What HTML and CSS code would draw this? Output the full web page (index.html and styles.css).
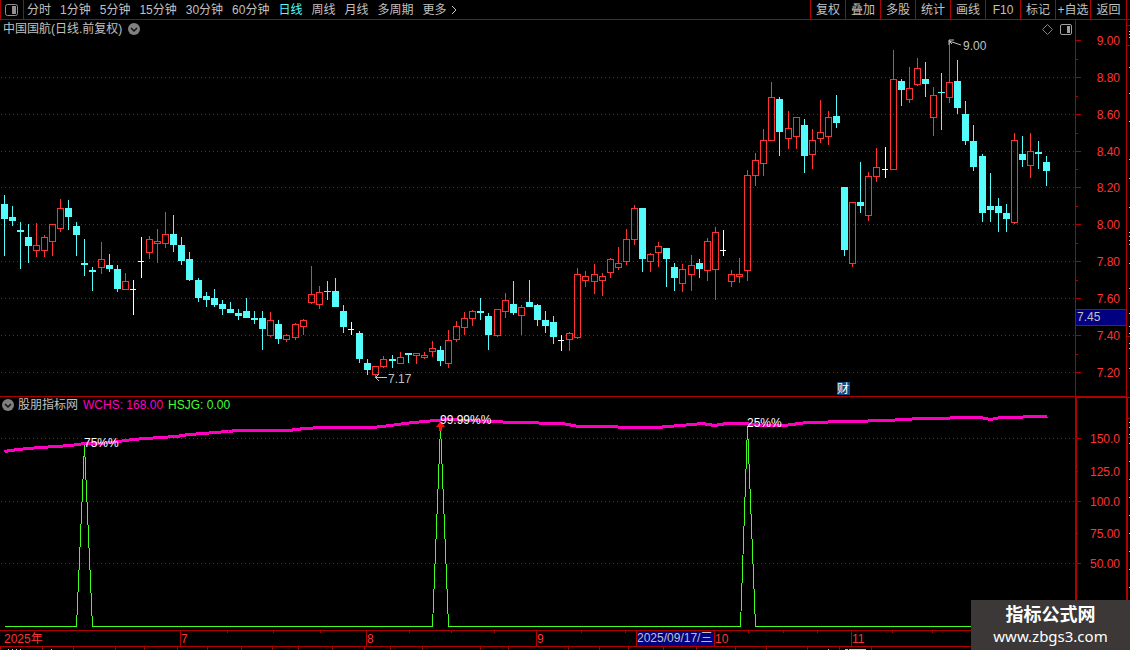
FILE: index.html
```html
<!DOCTYPE html>
<html lang="zh-CN">
<head>
  <meta charset="UTF-8">
  <meta name="viewport" content="width=device-width, initial-scale=1.0">
  <title>中国国航 日线</title>
  <link rel="stylesheet" href="styles.css">
</head>
<body>
  <div class="terminal">
    <header class="toolbar">
      <button class="layout-button" aria-label="布局">
        <svg width="13" height="12" viewBox="0 0 13 12"><rect x="0.5" y="0.5" width="12" height="11" rx="2" fill="none" stroke="#909090"/><rect x="7" y="2" width="4" height="8" fill="#909090"/></svg>
      </button>
      <nav class="periods">
        <button>分时</button>
        <button>1分钟</button>
        <button>5分钟</button>
        <button>15分钟</button>
        <button>30分钟</button>
        <button>60分钟</button>
        <button class="active">日线</button>
        <button>周线</button>
        <button>月线</button>
        <button>多周期</button>
        <button class="more">更多<svg width="6" height="10" viewBox="0 0 6 10"><path d="M1 1L5 5L1 9" fill="none" stroke="#c0c0c0"/></svg></button>
      </nav>
      <div class="tools">
        <button>复权</button>
        <button>叠加</button>
        <button>多股</button>
        <button>统计</button>
        <button>画线</button>
        <button>F10</button>
        <button>标记</button>
        <button>+自选</button>
        <button>返回</button>
      </div>
    </header>

    <main class="workspace">
      <section class="panel price-panel">
        <div class="panel-title">
          <span>中国国航(日线.前复权)</span>
          <button class="round-button" aria-label="展开"><svg width="12" height="12" viewBox="0 0 12 12"><circle cx="6" cy="6" r="6" fill="#808080"/><path d="M3 5L6 8L9 5" fill="none" stroke="#111" stroke-width="1.5"/></svg></button>
        </div>
        <div class="panel-icons">
          <button aria-label="标记"><svg width="11" height="11" viewBox="0 0 11 11"><path d="M5.5 0.5L10.5 5.5L5.5 10.5L0.5 5.5Z" fill="none" stroke="#808080"/></svg></button>
          <button aria-label="侧栏"><svg width="12" height="11" viewBox="0 0 12 11"><rect x="0.5" y="0.5" width="11" height="10" rx="1.5" fill="none" stroke="#a0a0a0"/><rect x="7" y="2" width="3" height="7" fill="#a0a0a0"/></svg></button>
        </div>
        <svg id="priceChart" class="chart" viewBox="0 20 1075 376"></svg>
      </section>
      <svg id="priceAxis" class="axis" viewBox="1075 20 51 376"></svg>

      <section class="panel indicator-panel">
        <div class="panel-title indicator-title">
          <button class="round-button" aria-label="展开"><svg width="12" height="12" viewBox="0 0 12 12"><circle cx="6" cy="6" r="6" fill="#808080"/><path d="M3 5L6 8L9 5" fill="none" stroke="#111" stroke-width="1.5"/></svg></button>
          <span>股朋指标网</span>
          <span class="wchs">WCHS: 168.00</span>
          <span class="hsjg">HSJG: 0.00</span>
        </div>
        <svg id="indicatorChart" class="chart" viewBox="0 397 1075 233"></svg>
      </section>
      <svg id="indicatorAxis" class="axis" viewBox="1075 397 51 233"></svg>

      <svg id="sideStrip" class="side-strip" viewBox="1126 20 4 610"></svg>
      <svg id="timeAxis" class="time-axis" viewBox="0 630 1130 20"></svg>
    </main>

    <div class="site-mark">
      <strong>指标公式网</strong>
      <span>www.zbgs3.com</span>
    </div>
  </div>

  <script src="chart.js"></script>
</body>
</html>
```
FILE: styles.css
```css
body {
  margin: 0;
  background-color: #000;
  color: #c0c0c0;
  font-family: "Liberation Sans", "Noto Sans CJK SC", sans-serif;
  font-size: 12px;
  line-height: 18px;
}

button {
  margin: 0;
  padding: 0;
  border: 0;
  background: none;
  color: inherit;
  font: inherit;
  white-space: nowrap;
  cursor: pointer;
}

svg {
  display: block;
}

.terminal {
  position: relative;
  min-height: 100vh;
  overflow: hidden;
}

.toolbar {
  display: flex;
  box-sizing: border-box;
  height: 20px;
  border-bottom: 1px solid #b00000;
}

.layout-button {
  box-sizing: border-box;
  width: 24px;
  padding-left: 4px;
  border-left: 1px solid #b00000;
  border-right: 1px solid #b00000;
}

.periods {
  display: flex;
  flex: 1;
  gap: 9px;
  padding-left: 3px;
}

.periods .active {
  color: #54fcfc;
}

.more {
  display: flex;
  align-items: center;
  gap: 4px;
}

.tools {
  display: flex;
  padding-right: 3px;
}

.tools button {
  box-sizing: border-box;
  width: 35px;
  border-left: 1px solid #b00000;
}

.tools button:last-child {
  width: 37px;
  border-right: 1px solid #b00000;
}

.workspace {
  display: grid;
  grid-template-columns: 1fr 51px 4px;
}

.panel {
  position: relative;
}

.chart,
.axis,
.side-strip,
.time-axis {
  width: 100%;
  height: auto;
}

.side-strip {
  grid-column: 3;
  grid-row: 1 / 3;
}

.price-panel,
#priceAxis {
  border-bottom: 1px solid #b00000;
}

.time-axis {
  grid-column: 1 / 4;
}

.panel-title {
  position: absolute;
  top: 0;
  left: 3px;
  display: flex;
  align-items: center;
  gap: 6px;
}

.indicator-title {
  left: 2px;
  gap: 5px;
  line-height: 16px;
}

.indicator-title .round-button {
  margin-right: -1px;
}

.wchs {
  color: #ff00c0;
}

.hsjg {
  color: #40ff30;
}

.panel-icons {
  position: absolute;
  top: 4px;
  right: 3px;
  display: flex;
  gap: 7px;
}

svg text {
  font-size: 12px;
  fill: #ff3232;
}

svg .note {
  fill: #c0c0c0;
}

svg .signal {
  fill: #fff;
}

.site-mark {
  position: absolute;
  right: 0;
  bottom: 0;
  display: flex;
  flex-direction: column;
  align-items: center;
  box-sizing: border-box;
  width: 159px;
  height: 50px;
  padding-top: 4px;
  background-color: #3c3838;
  color: #fff;
  font-family: "Liberation Sans", "Noto Sans CJK SC", sans-serif;
  font-size: 18px;
  line-height: 22px;
}

.site-mark span {
  font-family: "Noto Sans", sans-serif;
  font-size: 15px;
  line-height: 20px;
}
```
FILE: chart.js
```js
const RED = "#ff3232";
const CYAN = "#54fcfc";
const LINE = "#b00000";

// x, high, body top, body bottom, low, kind (r = up, c = down, w = flat)
const candles = [
  [4,195,204,219,256,"c"],[12,206,217,221,226,"c"],[20,222,230,232,269,"c"],[28,224,237,246,263,"c"],
  [36,223,245,251,257,"r"],[44,235,237,251,257,"r"],[52,224,224,242,256,"r"],[60,199,208,229,232,"r"],
  [68,200,208,217,230,"c"],[76,222,226,235,256,"c"],[84,239,263,265,276,"c"],[92,267,270,272,291,"c"],
  [101,242,259,268,274,"r"],[109,254,265,269,272,"c"],[117,265,269,289,292,"c"],[125,273,281,290,290,"r"],
  [133,280,289,290,315,"w"],[141,237,261,262,278,"w"],[149,236,239,253,259,"r"],[157,229,241,244,263,"r"],
  [165,212,234,244,248,"r"],[173,215,234,245,252,"c"],[181,237,245,261,265,"c"],[189,252,259,280,281,"c"],
  [198,278,280,298,302,"c"],[206,292,296,300,307,"c"],[214,289,298,305,307,"c"],[222,300,304,309,315,"c"],
  [230,302,309,313,313,"c"],[238,309,313,316,320,"c"],[246,298,311,318,318,"c"],[254,311,318,320,324,"c"],
  [262,311,318,329,350,"c"],[270,312,320,336,337,"r"],[278,320,324,339,344,"c"],[286,334,335,340,342,"r"],
  [295,323,324,338,340,"r"],[303,319,320,327,335,"r"],[311,266,294,303,304,"r"],[319,286,292,305,309,"r"],
  [327,281,291,292,300,"c"],[335,278,291,307,307,"c"],[343,305,311,327,333,"c"],[351,322,329,330,335,"w"],
  [359,331,333,359,363,"c"],[367,359,363,370,375,"c"],[375,366,366,375,378,"r"],[383,356,359,367,368,"r"],
  [392,355,359,361,368,"c"],[400,352,357,364,364,"r"],[408,353,353,355,363,"c"],[416,353,353,356,364,"r"],
  [424,352,355,358,359,"r"],[432,341,348,352,357,"r"],[440,346,350,361,366,"c"],[448,330,340,364,368,"r"],
  [456,321,326,340,342,"r"],[464,312,318,328,335,"r"],[472,310,311,319,326,"r"],[480,298,311,313,320,"c"],
  [488,313,316,335,350,"c"],[497,309,309,336,337,"r"],[505,293,300,312,318,"r"],[513,281,304,313,315,"c"],
  [521,305,307,316,335,"r"],[529,280,302,307,307,"c"],[537,304,305,320,326,"c"],[545,311,320,326,333,"c"],
  [553,316,322,337,344,"c"],[561,335,340,341,351,"w"],[569,332,333,340,351,"r"],[577,268,274,338,339,"r"],
  [585,271,276,281,287,"r"],[594,264,274,282,294,"r"],[602,273,276,281,296,"r"],[610,258,259,273,278,"r"],
  [618,247,263,268,270,"r"],[626,229,239,262,265,"r"],[634,205,208,240,245,"r"],[642,208,208,259,272,"c"],
  [650,253,254,262,272,"r"],[658,242,246,253,267,"r"],[666,248,248,259,287,"c"],[674,263,267,278,291,"c"],
  [682,264,269,284,292,"r"],[691,255,265,275,291,"r"],[699,259,263,269,278,"c"],[707,238,241,271,281,"r"],
  [715,227,232,270,300,"r"],[723,230,250,251,256,"w"],[731,270,274,282,287,"r"],[739,258,274,277,283,"r"],
  [747,170,175,271,281,"r"],[755,153,160,176,186,"r"],[763,129,140,164,176,"r"],[771,82,97,141,141,"r"],
  [779,97,99,132,156,"c"],[788,111,128,139,149,"r"],[796,117,117,137,149,"r"],[804,119,125,156,173,"c"],
  [812,129,140,155,169,"r"],[820,100,132,139,143,"r"],[828,111,117,137,145,"r"],[836,95,116,123,128,"c"],
  [844,187,187,250,256,"c"],[852,202,202,264,267,"r"],[860,162,202,206,213,"c"],[868,172,176,216,221,"r"],
  [876,148,167,177,182,"r"],[885,147,169,170,178,"w"],[893,50,79,170,170,"r"],[901,79,81,90,106,"c"],
  [909,67,88,100,103,"r"],[917,58,68,85,86,"r"],[925,62,79,84,97,"c"],[933,87,95,118,136,"r"],
  [941,73,92,93,130,"c"],[949,40,82,98,103,"r"],[957,60,81,108,114,"c"],[965,101,114,141,145,"c"],
  [973,125,141,167,171,"c"],[982,154,156,213,222,"c"],[990,173,206,210,222,"c"],[998,198,206,213,232,"c"],
  [1006,204,213,219,232,"c"],[1014,133,140,223,224,"r"],[1022,136,154,160,167,"c"],[1030,133,151,166,178,"r"],
  [1038,141,152,154,169,"c"],[1046,156,162,171,186,"c"]
];

const wchs = [
  [4,451],[10,450],[18,449],[27,448],[40,447],[55,446],[70,445],[84,443],[100,443],[118,441],[132,439],
  [146,438],[160,437],[176,436],[188,434],[204,433],[214,432],[228,431],[236,430],[288,430],[304,428],
  [322,427],[372,427],[390,425],[404,423],[424,421],[436,420],[446,419],[490,421],[514,422],[562,423],
  [578,426],[656,427],[680,425],[702,423],[714,425],[726,423],[744,423],[762,425],[784,425],[806,422],
  [850,421],[886,420],[920,418],[980,417],[990,419],[1000,417],[1047,416]
];

const hsjg = [
  [4,626],[76,626],[84,445],[92,626],[432,626],[440,426],[448,626],[740,626],[747,426],[755,626],[1075,626]
];

function rect(x, y, w, h, fill) {
  return `<rect x="${x}" y="${y}" width="${w}" height="${h}" fill="${fill}"/>`;
}

function text(x, y, value, attrs = "") {
  return `<text x="${x}" y="${y}" ${attrs}>${value}</text>`;
}

function gridLine(y) {
  return `<path d="M1 ${y + 0.5}H1074" stroke="#a01010" stroke-dasharray="1 3" shape-rendering="crispEdges"/>`;
}

function points(list) {
  return list.map(([x, y]) => `${x + 0.5},${y + 0.5}`).join(" ");
}

function candle([x, high, top, bottom, low, kind]) {
  if (kind === "w") {
    return rect(x, high, 1, low - high, "#fff") + rect(x - 3, top, 6, 1, "#fff");
  }
  if (kind === "c") {
    return rect(x, high, 1, low - high, CYAN) + rect(x - 3, top, 7, bottom - top, CYAN);
  }
  return rect(x, high, 1, top - high, RED) + rect(x, bottom, 1, low - bottom, RED) +
    `<rect x="${x - 2.5}" y="${top + 0.5}" width="6" height="${bottom - top - 1}" fill="none" stroke="${RED}"/>`;
}

function drawPriceChart() {
  let out = [77, 114, 151, 187, 224, 261, 298, 335, 372].map(gridLine).join("");
  out += `<g shape-rendering="crispEdges">${candles.map(candle).join("")}</g>`;
  out += `<path d="M961 45L949 41M949 45V40H954M950 42L952 44" fill="none" stroke="#c0c0c0"/>`;
  out += `<path d="M387 377.5H375M379 374L375.5 377.5L379 381" fill="none" stroke="#c0c0c0"/>`;
  out += text(963, 50, "9.00", 'class="note"') + text(388, 383, "7.17", 'class="note"');
  out += rect(837, 382, 13, 13, "#104880") + text(837, 393, "财", 'class="signal"');
  document.getElementById("priceChart").innerHTML = out;
}

function drawPriceAxis() {
  const labels = [[40,"9.00"],[77,"8.80"],[114,"8.60"],[151,"8.40"],[187,"8.20"],[224,"8.00"],[261,"7.80"],[298,"7.60"],[335,"7.40"],[372,"7.20"]];
  let out = rect(1075, 20, 1, 376, LINE);
  for (const [y, label] of labels) {
    out += rect(1076, y, 5, 1, LINE) + text(1120, y + 5, label, 'text-anchor="end"');
  }
  for (const y of [59, 96, 133, 169, 206, 243, 280, 354]) {
    out += rect(1076, y, 2, 1, LINE);
  }
  // current cursor price
  out += rect(1076, 309, 50, 17, LINE) + rect(1076, 310, 50, 15, "#000080") + text(1077, 321, "7.45", 'class="note"');
  document.getElementById("priceAxis").innerHTML = out;
}

function drawIndicator() {
  let out = [438, 501, 563].map(gridLine).join("");
  out += `<polyline points="${points(wchs)}" fill="none" stroke="#ff00c0" stroke-width="3" shape-rendering="crispEdges"/>`;
  out += `<polyline points="${points(hsjg)}" fill="none" stroke="#40ff20" shape-rendering="crispEdges"/>`;
  out += `<path d="M440.5 421L445 427H442V431H439V427H436Z" fill="#ff1010"/>`;
  out += text(84, 447, "75%%", 'class="signal"') + text(440, 424, "99.99%%", 'class="signal"') + text(747, 427, "25%%", 'class="signal"');
  document.getElementById("indicatorChart").innerHTML = out;

  let axis = rect(1075, 397, 2, 233, LINE) + rect(1077, 397, 49, 1, LINE);
  for (const [y, label] of [[438,"150.0"],[471,"125.0"],[501,"100.0"],[533,"75.00"],[563,"50.00"]]) {
    axis += rect(1077, y, label === "125.0" || label === "75.00" ? 1 : 4, 1, LINE);
    axis += text(1120, y + 5, label, 'text-anchor="end"');
  }
  document.getElementById("indicatorAxis").innerHTML = axis;
}

function drawSideStrip() {
  let out = rect(1126, 20, 1, 377, LINE) + rect(1126, 397, 2, 233, LINE);
  for (const y of [25, 45, 336, 397, 418, 437]) {
    out += rect(1127, y, 3, 1, LINE);
  }
  for (const y of [31, 34, 37, 67, 93, 121, 159, 178, 207, 232, 236, 240, 244, 263, 288, 313, 326, 333, 343, 348, 368, 422, 427, 434, 443, 461, 479, 497, 515, 533, 551, 569, 587]) {
    out += rect(1129, y, 1, 1, "#c0c0c0");
  }
  document.getElementById("sideStrip").innerHTML = out;
}

function drawTimeAxis() {
  let out = rect(0, 630, 1130, 1, LINE) + rect(0, 646, 1130, 1, LINE);
  for (const x of [180, 366, 536, 636, 714, 851]) {
    out += rect(x, 631, 1, 15, LINE);
  }
  for (const x of [227, 273, 320, 409, 451, 494, 581, 625, 748, 783, 817, 892, 932]) {
    out += rect(x, 631, 1, 2, LINE);
  }
  for (const x of [0, 42, 73, 115, 144, 177, 207, 241, 272, 298, 332, 364, 390, 422, 480, 508, 568, 599, 628, 663, 696, 735, 766, 807, 839, 871]) {
    out += rect(x, 647, 1, 3, LINE);
  }
  out += rect(637, 631, 77, 15, "#000080");
  out += text(4, 643, "2025年") + text(181, 643, "7") + text(367, 643, "8") + text(537, 643, "9");
  out += text(637, 642, "2025/09/17/三", 'class="note"') + text(715, 643, "10") + text(852, 643, "11");
  // tops of the row below
  for (const x of [8, 12, 16, 20, 51, 828]) {
    out += rect(x, 649, 1, 1, "#c0c0c0");
  }
  out += rect(845, 649, 3, 1, "#c0c0c0") + rect(849, 649, 17, 1, CYAN);
  document.getElementById("timeAxis").innerHTML = out;
}

drawPriceChart();
drawPriceAxis();
drawIndicator();
drawSideStrip();
drawTimeAxis();
```
